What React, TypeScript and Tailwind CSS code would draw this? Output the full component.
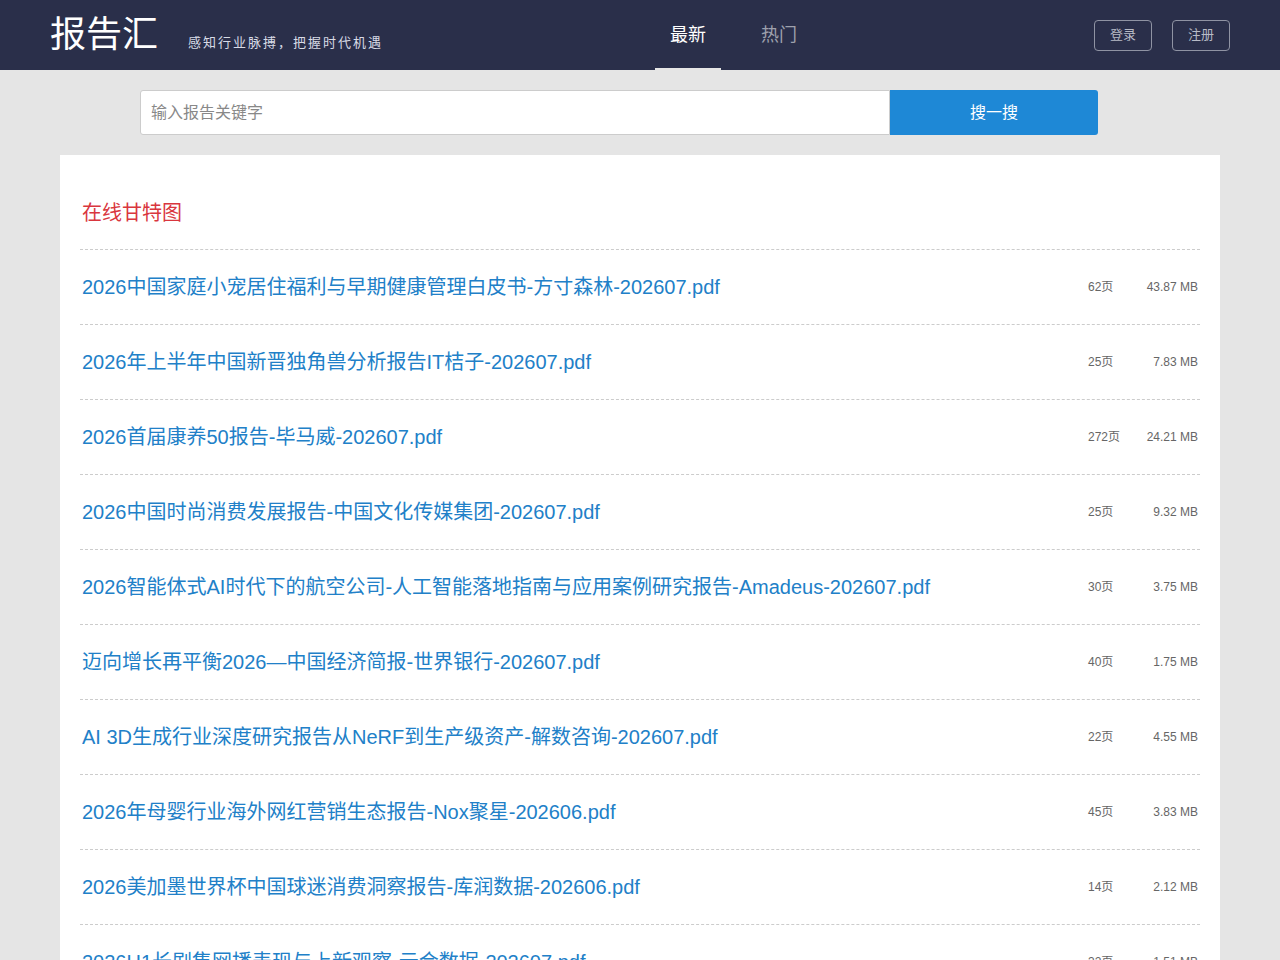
const reports = [
  { title: '2026中国家庭小宠居住福利与早期健康管理白皮书-方寸森林-202607.pdf', pages: '62页', size: '43.87 MB' },
  { title: '2026年上半年中国新晋独角兽分析报告IT桔子-202607.pdf', pages: '25页', size: '7.83 MB' },
  { title: '2026首届康养50报告-毕马威-202607.pdf', pages: '272页', size: '24.21 MB' },
  { title: '2026中国时尚消费发展报告-中国文化传媒集团-202607.pdf', pages: '25页', size: '9.32 MB' },
  { title: '2026智能体式AI时代下的航空公司-人工智能落地指南与应用案例研究报告-Amadeus-202607.pdf', pages: '30页', size: '3.75 MB' },
  { title: '迈向增长再平衡2026—中国经济简报-世界银行-202607.pdf', pages: '40页', size: '1.75 MB' },
  { title: 'AI 3D生成行业深度研究报告从NeRF到生产级资产-解数咨询-202607.pdf', pages: '22页', size: '4.55 MB' },
  { title: '2026年母婴行业海外网红营销生态报告-Nox聚星-202606.pdf', pages: '45页', size: '3.83 MB' },
  { title: '2026美加墨世界杯中国球迷消费洞察报告-库润数据-202606.pdf', pages: '14页', size: '2.12 MB' },
  { title: '2026H1长剧集网播表现与上新观察-云合数据-202607.pdf', pages: '32页', size: '1.51 MB' },
];

const font = { fontFamily: '"Liberation Sans", Arial, "Noto Sans CJK SC", sans-serif' };

export default function App() {
  return (
    <div className="min-h-screen bg-[#e5e5e5]" style={font}>
      <header className="h-[70px] bg-[#2a2f4a]">
        <div className="flex h-full items-center px-[50px]">
          <div className="flex items-center">
            <span className="text-[36px] leading-none text-white">报告汇</span>
            <span className="ml-[30px] mt-[16px] text-[13px] tracking-[2px] text-[#d8dbe6]">感知行业脉搏，把握时代机遇</span>
          </div>
          <nav className="ml-[272px] flex h-full items-stretch">
            <a className="flex items-center border-b-2 border-[#e6e6e6] px-[15px] pt-[2px] text-[18px] text-white">最新</a>
            <a className="ml-[25px] flex items-center border-b-2 border-transparent px-[15px] pt-[2px] text-[18px] text-[#9ea1ad]">热门</a>
          </nav>
          <div className="ml-auto flex items-center gap-[20px]">
            <button className="h-[31px] w-[58px] rounded-[4px] border border-[#8f93a3] text-[13px] text-[#b8bbc6]">登录</button>
            <button className="h-[31px] w-[58px] rounded-[4px] border border-[#8f93a3] text-[13px] text-[#b8bbc6]">注册</button>
          </div>
        </div>
      </header>

      <div className="flex justify-center pt-[20px] pb-[20px] pr-[42px]">
        <input
          className="h-[45px] w-[750px] rounded-l-[3px] border border-[#cccccc] bg-white px-[10px] text-[16px] text-[#555] outline-none placeholder:text-[#888]"
          placeholder="输入报告关键字"
        />
        <button className="h-[45px] w-[208px] rounded-r-[3px] bg-[#1e88d6] text-[16px] text-white">搜一搜</button>
      </div>

      <main className="mx-[60px] bg-white px-[20px] pt-[43px]">
        <h2 className="px-[2px] text-[20px] leading-[30px] text-[#d9363e]">在线甘特图</h2>
        <ul className="mt-[21px]">
          {reports.map((r) => (
            <li key={r.title} className="flex h-[75px] items-center border-t border-dashed border-[#cccccc] px-[2px]">
              <a className="flex-1 truncate text-[20px] text-[#2180c8]">{r.title}</a>
              <span className="w-[58px] text-[12px] text-[#666]">{r.pages}</span>
              <span className="w-[52px] text-right text-[12px] text-[#666]">{r.size}</span>
            </li>
          ))}
        </ul>
      </main>
    </div>
  );
}
